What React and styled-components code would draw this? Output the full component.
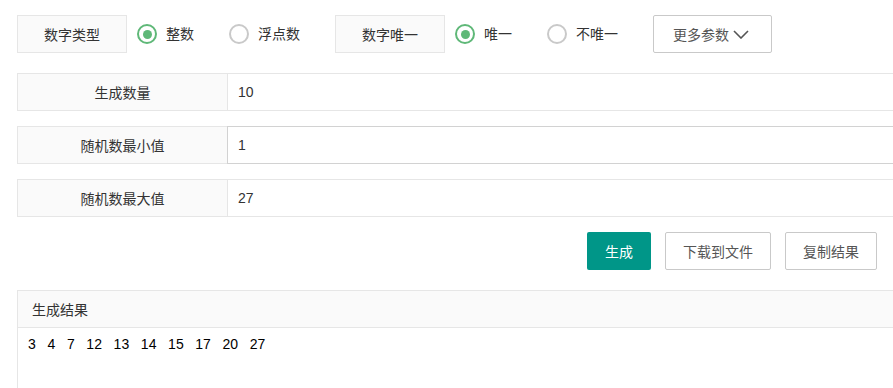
import React from "react";
import styled, { createGlobalStyle } from "styled-components";

const Global = createGlobalStyle`
  html, body { margin: 0; padding: 0; background: #fff; overflow: hidden; }
  body {
    font-family: "Liberation Sans", "Noto Sans CJK SC", sans-serif;
    font-size: 14px;
    color: #333;
  }
`;

const Page = styled.div`
  width: 860px;
  padding: 15px 0 0 17px;
`;

const TopBar = styled.div`
  display: flex;
  align-items: center;
  height: 38px;
`;

const PaneLabel = styled.div`
  box-sizing: border-box;
  flex: none;
  width: 110px;
  height: 38px;
  border: 1px solid #e6e6e6;
  background: #fafafa;
  display: flex;
  align-items: center;
  justify-content: center;
  margin-right: 10px;
  color: #333;
`;

const RadioItem = styled.label`
  display: flex;
  align-items: center;
  margin-right: 35px;
  cursor: pointer;
`;

const RadioCircle = styled.span`
  box-sizing: border-box;
  flex: none;
  width: 20px;
  height: 20px;
  border-radius: 50%;
  border: 2px solid ${(p) => (p.$on ? "#5FB878" : "#c9c9c9")};
  display: flex;
  align-items: center;
  justify-content: center;
  margin-right: 9px;
  &::after {
    content: "";
    width: 9px;
    height: 9px;
    border-radius: 50%;
    background: ${(p) => (p.$on ? "#5FB878" : "transparent")};
  }
`;

const RadioText = styled.span`
  line-height: 20px;
  color: #333;
  white-space: nowrap;
`;

const MoreButton = styled.button`
  box-sizing: border-box;
  flex: none;
  height: 38px;
  width: 119px;
  padding: 0 22px 0 19px;
  border: 1px solid #c9c9c9;
  border-radius: 2px;
  background: #fff;
  color: #555;
  font: inherit;
  display: flex;
  align-items: center;
  justify-content: space-between;
`;

const Rows = styled.div`
  width: 920px;
  margin-top: 20px;
  display: flex;
  flex-direction: column;
  gap: 15px;
`;

const Row = styled.div`
  display: flex;
  height: 38px;
`;

const RowLabel = styled.div`
  box-sizing: border-box;
  width: 210px;
  height: 38px;
  border: 1px solid #e6e6e6;
  border-right: none;
  background: #fafafa;
  display: flex;
  align-items: center;
  justify-content: center;
`;

const RowInput = styled.div`
  box-sizing: border-box;
  flex: 1;
  height: 38px;
  border: 1px solid ${(p) => (p.$hover ? "#d2d2d2" : "#e6e6e6")};
  padding-left: 10px;
  display: flex;
  align-items: center;
  color: #333;
`;

const Actions = styled.div`
  margin-top: 15px;
  display: flex;
  justify-content: flex-end;
  gap: 14px;
`;

const Btn = styled.button`
  box-sizing: border-box;
  height: 38px;
  padding: 0 ${(p) => (p.$primary ? "18px" : "17px")};
  border: ${(p) => (p.$primary ? "none" : "1px solid #c9c9c9")};
  border-radius: 2px;
  background: ${(p) => (p.$primary ? "#009688" : "#fff")};
  color: ${(p) => (p.$primary ? "#fff" : "#555")};
  font: inherit;
  white-space: nowrap;
`;

const Card = styled.div`
  width: 920px;
  margin-top: 20px;
  border: 1px solid #e6e6e6;
  border-right: none;
  height: 200px;
`;

const CardHeader = styled.div`
  height: 36px;
  background: #fafafa;
  border-bottom: 1px solid #e6e6e6;
  padding-left: 14px;
  display: flex;
  align-items: center;
`;

const CardBody = styled.div`
  padding: 6px 10px;
  line-height: 20px;
  white-space: pre;
  color: #000;
`;

const Chevron = () => (
  <svg width="16" height="9" viewBox="0 0 16 9">
    <polyline points="1,1 8,8 15,1" fill="none" stroke="#555" strokeWidth="1.6" />
  </svg>
);

const Radio = ({ on, children }) => (
  <RadioItem>
    <RadioCircle $on={on} />
    <RadioText>{children}</RadioText>
  </RadioItem>
);

export default function App() {
  const nums = [3, 4, 7, 12, 13, 14, 15, 17, 20, 27];
  return (
    <>
      <Global />
      <Page>
        <TopBar>
          <PaneLabel>数字类型</PaneLabel>
          <Radio on>整数</Radio>
          <Radio>浮点数</Radio>
          <PaneLabel>数字唯一</PaneLabel>
          <Radio on>唯一</Radio>
          <Radio>不唯一</Radio>
          <MoreButton>
            <span>更多参数</span>
            <Chevron />
          </MoreButton>
        </TopBar>
        <Rows>
          <Row>
            <RowLabel>生成数量</RowLabel>
            <RowInput>10</RowInput>
          </Row>
          <Row>
            <RowLabel>随机数最小值</RowLabel>
            <RowInput $hover>1</RowInput>
          </Row>
          <Row>
            <RowLabel>随机数最大值</RowLabel>
            <RowInput>27</RowInput>
          </Row>
        </Rows>
        <Actions>
          <Btn $primary>生成</Btn>
          <Btn>下载到文件</Btn>
          <Btn>复制结果</Btn>
        </Actions>
        <Card>
          <CardHeader>生成结果</CardHeader>
          <CardBody>{nums.join("   ")}</CardBody>
        </Card>
      </Page>
    </>
  );
}
